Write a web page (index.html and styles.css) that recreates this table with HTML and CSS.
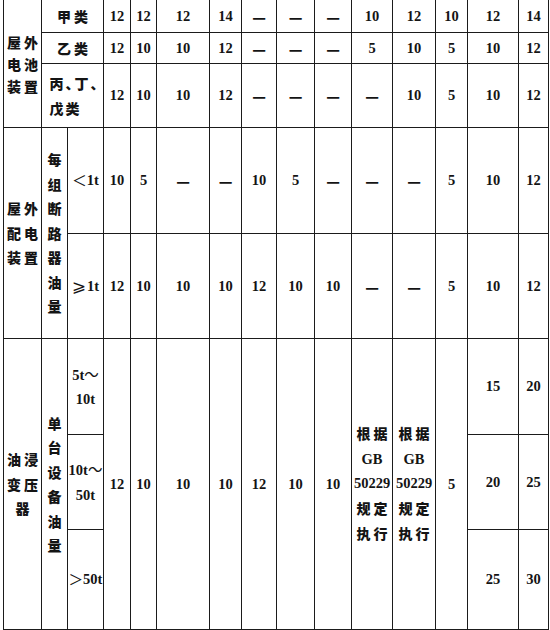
FILE: index.html
```html
<!DOCTYPE html>
<html lang="zh">
<head>
<meta charset="utf-8">
<title>防火间距表</title>
<link rel="stylesheet" href="styles.css">
</head>
<body>
<div class="tbl">
  <!-- 屋外电池装置 -->
  <div class="c rs3"><span class="two l22">屋外电池装置</span></div>
  <div class="c cs2"><span class="cn">甲类</span></div>
  <div class="c">12</div><div class="c">12</div><div class="c">12</div><div class="c">14</div>
  <div class="c"><span class="dash">—</span></div><div class="c"><span class="dash">—</span></div><div class="c"><span class="dash">—</span></div>
  <div class="c">10</div><div class="c">12</div><div class="c">10</div><div class="c">12</div><div class="c">14</div>

  <div class="c cs2"><span class="cn">乙类</span></div>
  <div class="c">12</div><div class="c">10</div><div class="c">10</div><div class="c">12</div>
  <div class="c"><span class="dash">—</span></div><div class="c"><span class="dash">—</span></div><div class="c"><span class="dash">—</span></div>
  <div class="c">5</div><div class="c">10</div><div class="c">5</div><div class="c">10</div><div class="c">12</div>

  <div class="c cs2"><span class="cn multi">丙、丁、<br>戊类</span></div>
  <div class="c">12</div><div class="c">10</div><div class="c">10</div><div class="c">12</div>
  <div class="c"><span class="dash">—</span></div><div class="c"><span class="dash">—</span></div><div class="c"><span class="dash">—</span></div>
  <div class="c"><span class="dash">—</span></div><div class="c">10</div><div class="c">5</div><div class="c">10</div><div class="c">12</div>

  <!-- 屋外配电装置 -->
  <div class="c rs2"><span class="two">屋外配电装置</span></div>
  <div class="c rs2"><span class="vert">每组断路器油量</span></div>
  <div class="c"><span class="sym">＜</span>1t</div>
  <div class="c">10</div><div class="c">5</div><div class="c"><span class="dash">—</span></div><div class="c"><span class="dash">—</span></div>
  <div class="c">10</div><div class="c">5</div><div class="c"><span class="dash">—</span></div>
  <div class="c"><span class="dash">—</span></div><div class="c"><span class="dash">—</span></div><div class="c">5</div><div class="c">10</div><div class="c">12</div>

  <div class="c"><span class="sym ge">⩾</span>1t</div>
  <div class="c">12</div><div class="c">10</div><div class="c">10</div><div class="c">10</div>
  <div class="c">12</div><div class="c">10</div><div class="c">10</div>
  <div class="c"><span class="dash">—</span></div><div class="c"><span class="dash">—</span></div><div class="c">5</div><div class="c">10</div><div class="c">12</div>

  <!-- 油浸变压器 -->
  <div class="c rs3"><span class="two">油浸变压器</span></div>
  <div class="c rs3"><span class="vert">单台设备油量</span></div>
  <div class="c"><span class="multi">5t<span class="sym">～</span><br>10t</span></div>
  <div class="c rs3">12</div><div class="c rs3">10</div><div class="c rs3">10</div><div class="c rs3">10</div>
  <div class="c rs3">12</div><div class="c rs3">10</div><div class="c rs3">10</div>
  <div class="c rs3"><span class="multi"><span class="cn">根据</span><br>GB<br>50229<br><span class="cn">规定</span><br><span class="cn">执行</span></span></div>
  <div class="c rs3"><span class="multi"><span class="cn">根据</span><br>GB<br>50229<br><span class="cn">规定</span><br><span class="cn">执行</span></span></div>
  <div class="c rs3">5</div>
  <div class="c">15</div><div class="c">20</div>

  <div class="c"><span class="multi">10t<span class="sym">～</span><br>50t</span></div>
  <div class="c">20</div><div class="c">25</div>

  <div class="c"><span class="sym">＞</span>50t</div>
  <div class="c">25</div><div class="c">30</div>
</div>
</body>
</html>
```

FILE: styles.css
```css
html, body {
  margin: 0;
  padding: 0;
  background: #ffffff;
}

body {
  width: 550px;
  height: 630px;
  overflow: hidden;
}

.tbl {
  margin-left: 3px;
  width: 544px;
  display: grid;
  grid-template-columns: 37px 25px 35px 26px 25px 52px 31px 34px 37px 36px 40px 42px 31px 50px 29px;
  grid-template-rows: 32px 30px 63px 105px 104px 95px 94px 99px;
  gap: 1px;
  padding: 0 1px 1px 1px;
  background: #1b1b1b;
  font-family: "Liberation Serif", "Noto Sans CJK SC", serif;
  font-weight: 700;
  font-size: 14.5px;
  color: #141414;
}

.c {
  background: #ffffff;
  display: flex;
  align-items: center;
  justify-content: center;
  text-align: center;
  line-height: 1;
}

.cs2 { grid-column: span 2; }
.rs2 { grid-row: span 2; }
.rs3 { grid-row: span 3; }

.cn {
  font-family: "Noto Sans CJK SC", sans-serif;
  font-size: 14px;
  font-weight: 900;
  letter-spacing: 3px;
  padding-left: 3px;
}

.multi {
  display: inline-block;
  line-height: 24.5px;
  text-align: center;
}

.cs2 .multi {
  text-align: left;
  line-height: 25px;
  font-feature-settings: "halt";
  letter-spacing: 2px;
  padding-left: 4px;
}

.two {
  display: block;
  width: 35px;
  padding-left: 3px;
  font-family: "Noto Sans CJK SC", sans-serif;
  font-size: 14px;
  font-weight: 900;
  letter-spacing: 3px;
  line-height: 24.5px;
  text-align: center;
}

.two.l22 {
  line-height: 22px;
}

.vert {
  display: block;
  width: 14px;
  font-family: "Noto Sans CJK SC", sans-serif;
  font-size: 14px;
  font-weight: 900;
  line-height: 24.5px;
  text-align: center;
}

.dash {
  font-family: "Noto Sans CJK SC", sans-serif;
  font-size: 15px;
  font-weight: 900;
}

.sym {
  font-family: "Noto Sans CJK SC", sans-serif;
  font-weight: 400;
}

.sym.ge {
  font-family: "DejaVu Sans", "Noto Sans CJK SC", sans-serif;
  font-size: 17px;
  margin-right: 1px;
}
```
